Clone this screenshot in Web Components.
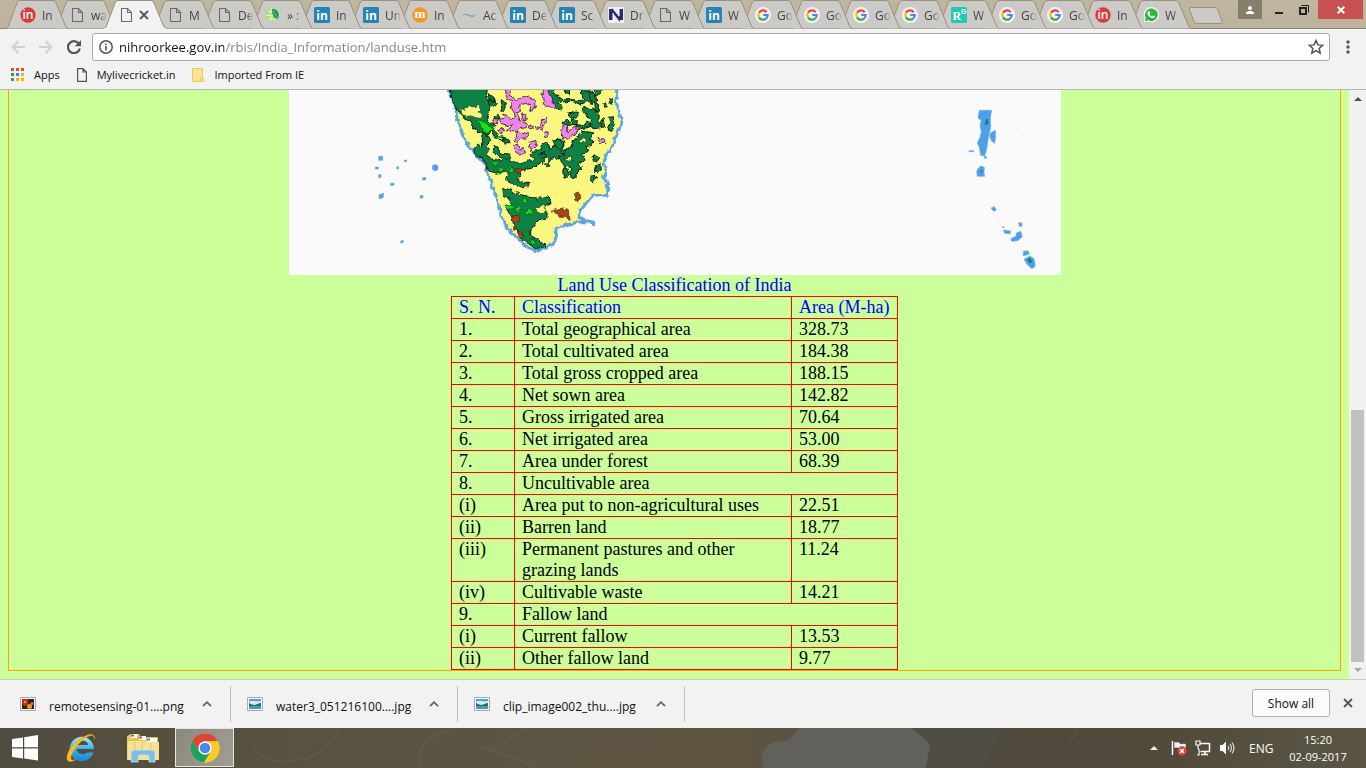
<!DOCTYPE html>
<html lang="en">
<head>
<meta charset="utf-8">
<title>Land Use Classification of India</title>
<style>
html, body { margin: 0; height: 100%; }
body { font-family: "Open Sans", "Noto Sans", sans-serif; font-size: 12px; color: #111; overflow: hidden; }
</style>
</head>
<body>
<desktop-screen>
  <tab-strip slot="top"></tab-strip>
  <nav-toolbar slot="top"></nav-toolbar>
  <bookmark-bar slot="top">
    <bookmark-item icon="apps">Apps</bookmark-item>
    <bookmark-item icon="page">Mylivecricket.in</bookmark-item>
    <bookmark-item icon="folder">Imported From IE</bookmark-item>
  </bookmark-bar>
  <page-view>
    <land-map></land-map>
    <landuse-table></landuse-table>
  </page-view>
  <download-shelf slot="bottom">
    <download-item icon="pngfile">remotesensing-01....png</download-item>
    <download-item icon="jpgfile">water3_051216100....jpg</download-item>
    <download-item icon="jpgfile">clip_image002_thu....jpg</download-item>
  </download-shelf>
  <task-bar slot="bottom"></task-bar>
</desktop-screen>

<script>
const gLogo = '<g fill="none" stroke-width="2.2"><path d="M11.7 5.2A4.7 4.7 0 0 0 4 5.6" stroke="#e8453c"/><path d="M4 5.6A4.7 4.7 0 0 0 4 10.4" stroke="#fbbc05"/><path d="M4 10.4A4.7 4.7 0 0 0 11.2 11.5" stroke="#34a853"/><path d="M11.2 11.5A4.7 4.7 0 0 0 12.7 8H8.2" stroke="#4285f4"/></g>';
const ICONS = {
  doc: [16, 16, '<path d="M3.5 1.5h6l4 4v9h-10zM9.500 1.500v4h4" fill="none" stroke="#6a6a6a" stroke-width="1.1"/>'],
  page: [10, 14, '<path d="M.6.600h5.400l3.400 3.400v9.400H.600zM6 .600v3.400h3.400" fill="none" stroke="#555" stroke-width="1.200"/>'],
  linkedin: [16, 16, '<rect width="16" height="16" rx="1.500" fill="#2683b4"/><text x="8" y="12.500" font-family="Open Sans" font-weight="700" font-size="12" text-anchor="middle" fill="#fff">in</text>'],
  redin: [16, 16, '<circle cx="8" cy="8" r="7.700" fill="#db3b38"/><text x="8" y="12" font-family="Open Sans" font-weight="600" font-size="12" text-anchor="middle" fill="#fff">in</text>'],
  mdot: [16, 16, '<circle cx="8" cy="8" r="7.700" fill="#ee9b26"/><text x="8" y="11" font-family="Liberation Serif" font-weight="700" font-size="13" text-anchor="middle" fill="#fff">m</text>'],
  globe: [16, 16, '<circle cx="7" cy="7.500" r="6.500" fill="#a8dd6c"/><path d="M1 8c4 1 8 1 12 0M3 4c3 1 5 1 8 0M7 1c-3 4-2 10 0 13M3 12h8" stroke="#e9f6d5" fill="none"/><path d="M7 2c6-1 8 5 6 10-4 0-6-4-6-10z" fill="#219650"/><path d="M8 3l5 9" stroke="#83d490" stroke-width=".7"/>'],
  wave: [16, 16, '<path d="M.5 9.500c2.500-4 5-3.500 7.500-2s5 1.500 7.500-1c-2 4.500-5 4-8 2.500s-5-1-7 .5z" fill="#73b3ae"/>'],
  navy: [16, 16, '<rect width="16" height="16" fill="#eee"/><path d="M1 2h4v11H1zM11 2h4v11h-4z" fill="#2b2a70"/><path d="M4 1l8 10v4L4 5z" fill="#2b2a70"/><path d="M5 6v9M11 1v8" stroke="#fff"/>'],
  google: [16, 16, '<circle cx="8" cy="8" r="8" fill="#f5f3f0"/>' + gLogo],
  rg: [16, 16, '<rect width="16" height="16" rx="1.500" fill="#26c6b4"/><text x="1.500" y="13" font-family="Liberation Serif" font-weight="700" font-size="12" fill="#fff">R</text><text x="10" y="7" font-family="Liberation Sans" font-weight="700" font-size="7" fill="#fff">G</text>'],
  whatsapp: [16, 16, '<path d="M.6 15.500l1.200-4A7.600 7.600 0 1 1 5 14.500z" fill="#fff"/><path d="M1.800 14.200l1-3.300A6.400 6.400 0 1 1 5.200 13.300z" fill="#2cb742"/><path d="M5.500 4.300l1.200.2.700 1.800-.8.900c.6 1.100 1.300 1.700 2.400 2.200l.9-1 1.900.9c0 1.300-1 1.900-2 1.900-2.900-.3-5.200-2.900-5.500-5 0-.9.500-1.600 1.200-1.900z" fill="#fff"/>'],
  close: [10, 10, '<path d="M1 1l8 8M9 1l-8 8" stroke="#555" stroke-width="1.800" fill="none"/>'],
  back: [14, 14, '<path d="M14 7H1.500M7.500 1L1.500 7l6 6" fill="none" stroke="#d0d0d0" stroke-width="2"/>'],
  fwd: [14, 14, '<path d="M0 7h12.500M6.500 1l6 6-6 6" fill="none" stroke="#d0d0d0" stroke-width="2"/>'],
  reload: [14, 14, '<path d="M11.600 3.400A6 6 0 1 0 12.800 8.500" fill="none" stroke="#555" stroke-width="2.200"/><path d="M14 0v6.300H7.700z" fill="#555"/>'],
  info: [14, 14, '<circle cx="7" cy="7" r="6.200" fill="none" stroke="#555" stroke-width="1.500"/><path d="M7 6v4.500M7 3.500v1.600" stroke="#555" stroke-width="1.600"/>'],
  star: [16, 16, '<path d="M8 1.500l1.900 4.400 4.800.4-3.600 3.200 1.100 4.700L8 11.700l-4.200 2.500 1.100-4.700L1.300 6.300l4.800-.4z" fill="none" stroke="#555" stroke-width="1.500"/>'],
  menu: [4, 14, '<circle cx="2" cy="2" r="1.700" fill="#555"/><circle cx="2" cy="7" r="1.700" fill="#555"/><circle cx="2" cy="12" r="1.700" fill="#555"/>'],
  apps: [13, 13, '<g fill="#e8453c"><path d="M0 0h3v3H0zM5 0h3v3H5zM10 0h3v3h-3z"/></g><path d="M0 5h3v3H0zM0 10h3v3H0z" fill="#2f9e52"/><path d="M5 5h3v3H5z" fill="#3b82f0"/><path d="M10 5h3v3h-3zM5 10h3v3H5zM10 10h3v3h-3z" fill="#f5b400"/>'],
  folder: [12, 14, '<path d="M.5.500h10v10h1v3H.5z" fill="#ffe591" stroke="#e8c860"/><path d="M8.500 13v-3h2" fill="none" stroke="#e8c860"/>'],
  user: [8, 8, '<circle cx="4" cy="2" r="2" fill="#fff"/><path d="M0 8V6.500L2.500 5h3L8 6.500V8z" fill="#fff"/>'],
  min: [8, 8, '<path d="M0 7h8" stroke="#222" stroke-width="2"/>'],
  restore: [10, 10, '<path d="M1 3h6v6H1z" fill="none" stroke="#222" stroke-width="2"/><path d="M2.500.500h7v7" fill="none" stroke="#222"/>'],
  winx: [8, 8, '<path d="M.7.700l6.600 6.600M7.300.700L.7 7.300" stroke="#fff" stroke-width="2"/>'],
  caret: [10, 6, '<path d="M1 5.200l4-4 4 4" fill="none" stroke="#666" stroke-width="1.800"/>'],
  pngfile: [16, 14, '<path d="M.5.500h15v13H.5z" fill="#fff" stroke="#aaa"/><path d="M2 2h12v10H2z" fill="#3a1c12"/><path d="M2 2h6v6l-4 1-2-2z" fill="#c62718"/><circle cx="5" cy="5" r="1.200" fill="#e8a52a"/><circle cx="9.500" cy="9.500" r="2.500" fill="#e99a1c"/><circle cx="12" cy="6.500" r="1.500" fill="#d77b1b"/>'],
  jpgfile: [16, 14, '<path d="M.5.500h15v13H.5z" fill="#fff" stroke="#aaa"/><path d="M2 2h12v10H2z" fill="#4aa3dc"/><path d="M2 5c3-2 6 0 12-1v5H2z" fill="#d5ecf8"/><path d="M2 6c2 1 4 2 6 2 2-1 4-2 6-2v3H2z" fill="#2e6b5e"/><path d="M2 9h12v3H2z" fill="#3f9fc2"/>'],
  windows: [26, 26, '<path d="M0 4l11-1.600V12.300H0zM12.200 2.200L26 0v12.300H12.200zM0 13.500h11v9.900L0 21.900zM12.200 13.500H26V25.500l-13.800-1.900z" fill="#fff"/>'],
  ie: [32, 32, '<defs><linearGradient id="b" x2="0" y2="1"><stop offset="0" stop-color="#a2e6ff"/><stop offset=".5" stop-color="#35b3ee"/><stop offset="1" stop-color="#1b83d6"/></linearGradient></defs><path d="M22.500 20.500h6A12.200 12.200 0 1 1 29 17H11.500c.4 3.300 2.600 5 5.700 5 2.400 0 4-.5 5.300-1.500zM11.800 13h11.400c-.5-2.800-2.700-4.200-5.600-4.200s-5.200 1.600-5.800 4.200z" fill="url(#b)"/><path d="M29.500 7c1-4-3-6-9-3C12 7 2 18 2 26c0 5 5 4 9 1.500-5 2-6-.5-4.500-4.500C9 16 17 7.500 23 4.500c4-2 6.500-1 6.500 2.500z" fill="#fbbf1d" stroke="#e29a12" stroke-width=".5"/>'],
  explorer: [32, 30, '<path d="M0 3l4-2h8l2 3h17v22H0z" fill="#e7c35e"/><path d="M4 1h6v4H4z" fill="#fff"/><path d="M4 1.500h3v2H4z" fill="#19a84a"/><path d="M12 3h7v4h-7z" fill="#fff"/><path d="M12 3.500h3v2h-3z" fill="#e24a2c"/><path d="M20 5h10v4H20z" fill="#fff"/><path d="M20 5.500h3v2h-3z" fill="#2c8ee0"/><path d="M0 8h20l2 1h10v18H0z" fill="#f5e093"/><path d="M0 8v19M8 9v16M15 9v12M24 10v9" stroke="#e0c060" stroke-width=".8"/><path d="M4 29V20q0-3 4-3h16q4 0 4 3v9h-6v-5q0-2-3-2h-5q-3 0-3 2v5z" fill="#7dbde0" stroke="#c3e8f8" stroke-width=".8"/>'],
  chrome: [30, 30, '<circle cx="15" cy="15" r="14.500" fill="#fbc116"/><path d="M2.400 7.800A14.500 14.500 0 0 1 27.800 8.200L15 8.300 9 18.500z" fill="#dc4437"/><path d="M2.400 7.800A14.500 14.500 0 0 0 14 29.500L21 18.400 9.200 18.400z" fill="#1da05f"/><path d="M27.800 8.200A14.500 14.500 0 0 1 14 29.500l7-11.500-1.500-9.800z" fill="#fccb28"/><circle cx="15" cy="15" r="6.700" fill="#fff"/><circle cx="15" cy="15" r="5.300" fill="#4a88ef"/>'],
  up: [8, 4, '<path d="M0 4l4-4 4 4z" fill="#eee"/>'],
  flag: [16, 16, '<path d="M1.500 1v14" stroke="#fff" stroke-width="1.500"/><path d="M3 2h5l1 1.500h6V9H8L7 8H3z" fill="#eee" stroke="#333" stroke-width=".5"/><circle cx="11" cy="11" r="4.700" fill="#e03a2f"/><path d="M9 9l4 4M13 9l-4 4" stroke="#fff" stroke-width="1.600"/>'],
  network: [16, 16, '<path d="M5 3.500h9.500v8H5.500M10 12v2M6 14.500h7" fill="none" stroke="#fff" stroke-width="1.500"/><path d="M1 1h4v4H1zM3 5v3l1 2v5H2" fill="#444" stroke="#fff" stroke-width="1.200"/>'],
  sound: [16, 16, '<path d="M1 5h2.500L7 1.500v13L3.500 11H1z" fill="#fff"/><path d="M9 6q1.500 2 0 4M11 4q3 4 0 8M13 2.500q4 5.500 0 11" fill="none" stroke="#ddd" stroke-width="1.200"/>'],
  scrollup: [8, 4, '<path d="M0 4l4-4 4 4z" fill="#505050"/>'],
  scrolldown: [8, 4, '<path d="M0 0l4 4 4-4z" fill="#a3a3a3"/>']
};

function define(name, html, setup) {
  const tpl = document.createElement('template');
  tpl.innerHTML = html;
  customElements.define(name, class extends HTMLElement {
    constructor() {
      super();
      this.attachShadow({ mode: 'open' }).appendChild(tpl.content.cloneNode(true));
    }
    connectedCallback() { if (setup) setup(this, this.shadowRoot); }
  });
}

define('ui-icon', '<style>:host{display:block;flex:none;line-height:0}svg{display:block}</style><span></span>', (el, root) => {
  const [w, h, art] = ICONS[el.getAttribute('name')];
  root.querySelector('span').innerHTML = `<svg width="${w}" height="${h}" viewBox="0 0 ${w} ${h}" aria-hidden="true">${art}</svg>`;
});

define('desktop-screen', `<style>
:host{display:flex;flex-direction:column;height:100vh;background:#f2f2f2}
main{flex:1;min-height:0;display:flex}
</style><slot name="top"></slot><main><slot></slot></main><slot name="bottom"></slot>`);

define('browser-tab', `<style>
:host{display:block;flex:none;width:62px;margin-right:-13px;height:28px;position:relative}
:host([narrow]){margin-right:-14px}
.shape{position:absolute;inset:0;z-index:-1;display:block}
.shape path{fill:#cccac7;stroke:#99917e}
:host([active]) .shape path{fill:#f2f2f2}
:host([active]) .shape line{stroke:#f2f2f2}
.shape line{stroke:none}
button{all:unset;box-sizing:border-box;display:flex;align-items:center;gap:6px;width:53px;height:28px;padding:2px 0 0 14px;overflow:hidden}
span{overflow:hidden;white-space:nowrap;flex:1;color:#444;-webkit-mask-image:linear-gradient(90deg,#000 50%,transparent 95%)}
:host([active]) button{gap:5px}
</style><svg class="shape" width="62" height="29"><path d="M0 28.500L2 27 11 3Q12 .5 14 .5H47Q49 .5 50 3L60 27 62 28.500"/><line x1="0" y1="28.500" x2="62" y2="28.500"/></svg><button type="button"></button>`,
(el, root) => {
  el.style.isolation = 'isolate';
  const b = root.querySelector('button');
  b.innerHTML = `<ui-icon name="${el.getAttribute('icon')}"></ui-icon>` + (el.hasAttribute('active') ? '<ui-icon name="close"></ui-icon>' : '<span></span>');
  const s = b.querySelector('span');
  if (s) s.textContent = el.getAttribute('label');
  else b.setAttribute('aria-label', 'Current page');
});

define('tab-strip', `<style>
:host{display:flex;height:29px;background:linear-gradient(#c0b69f,#bdb39c);box-sizing:border-box;justify-content:space-between;box-shadow:inset 0 -1px #8c8475}
.tabs{display:flex;padding-left:6px}
.new{all:unset;margin:6px 0 0 11px;height:18px}
svg{display:block}
.win{display:flex;flex:none;align-items:flex-start;padding-right:3px}
.win button{all:unset;box-sizing:border-box;height:19px;display:flex;align-items:center;justify-content:center}
.win .user{background:#857e6d;width:24px;margin-right:4px}
.win .min{width:25px}
.win .max{width:26px}
.win .red{background:#c75050;width:45px;margin-left:1px}
</style><div class="tabs"></div><div class="win">
<button class="user" aria-label="Profile"><ui-icon name="user"></ui-icon></button>
<button class="min" aria-label="Minimize"><ui-icon name="min"></ui-icon></button>
<button class="max" aria-label="Restore"><ui-icon name="restore"></ui-icon></button>
<button class="red" aria-label="Close"><ui-icon name="winx"></ui-icon></button></div>`, (el, root) => {
  const list = [['redin','In'],['doc','wa'],['doc',''],['doc','M'],['doc','De'],['globe','» :'],['linkedin','In'],['linkedin','Un'],['mdot','In'],['wave','Ac'],['linkedin','De'],['linkedin','Sc'],['navy','Dr'],['doc','W'],['linkedin','W'],['google','Go'],['google','Go'],['google','Go'],['google','Go'],['rg','W'],['google','Go'],['google','Go'],['redin','In'],['whatsapp','W']];
  const box = root.querySelector('.tabs');
  list.forEach(([icon, label], i) => {
    const t = document.createElement('browser-tab');
    t.setAttribute('icon', icon);
    t.setAttribute('label', label);
    if (i === 2) t.setAttribute('active', '');
    if (i > 18) t.setAttribute('narrow', '');
    t.style.zIndex = i === 2 ? 50 : 40 - i;
    box.appendChild(t);
  });
  const n = document.createElement('button');
  n.className = 'new';
  n.setAttribute('aria-label', 'New tab');
  n.innerHTML = '<svg width="36" height="18"><path d="M3 1.500h24q2 0 3 2l4 12q0 2-2 2H9q-2 0-3-2L1.500 3.500q0-2 1.500-2z" fill="#cccac7" stroke="#99917e"/></svg>';
  box.appendChild(n);
});

define('nav-toolbar', `<style>
:host{display:flex;align-items:center;height:33px;padding:3px 16px 0 11px;box-sizing:border-box}
button{all:unset;display:block;margin-right:14px}
.box{flex:1;display:flex;align-items:center;gap:6px;height:28px;box-sizing:border-box;border:1px solid #a9a9a9;border-radius:3px;background:#fff;padding:0 5px 0 6px;margin-right:16px;margin-left:-3px}
.box button,.menu{margin:0}
input{all:unset;flex:1;min-width:0;font:13px/20px "Open Sans","Noto Sans",sans-serif;color:transparent;background:linear-gradient(90deg,#111 105px,#808080 105px);-webkit-background-clip:text;background-clip:text}
</style>
<button aria-label="Back"><ui-icon name="back"></ui-icon></button>
<button aria-label="Forward"><ui-icon name="fwd"></ui-icon></button>
<button aria-label="Reload"><ui-icon name="reload"></ui-icon></button>
<div class="box"><ui-icon name="info"></ui-icon><input type="text" aria-label="Address" value="nihroorkee.gov.in/rbis/India_Information/landuse.htm"><button aria-label="Bookmark this page"><ui-icon name="star"></ui-icon></button></div>
<button class="menu" aria-label="Menu"><ui-icon name="menu"></ui-icon></button>`);

define('bookmark-bar', `<style>
:host{display:flex;align-items:center;gap:17px;height:28px;box-sizing:border-box;padding:0 11px 2px;border-bottom:1px solid #b6b6b6}
</style><slot></slot>`);
define('bookmark-item', `<style>
:host{display:block}
a{display:flex;align-items:center;gap:10px;color:#111;text-decoration:none;font-size:11px;line-height:18px}
</style><a href="#"><i></i><slot></slot></a>`, (el, root) => {
  const ic = document.createElement('ui-icon');
  ic.setAttribute('name', el.getAttribute('icon'));
  root.querySelector('i').replaceWith(ic);
});

define('page-view', `<style>
:host{display:flex;flex:1;min-width:0;background:#ccff99}
.doc{flex:1;min-width:0;overflow:hidden;padding:0 8px 8px}
.frame{border:1px solid #ffa500;border-top:0;display:flex;flex-direction:column;align-items:center}
.rail{width:17px;box-sizing:border-box;background:#f1f1f1;display:flex;flex-direction:column;align-items:center;padding:7px 2px 7px}
.before{flex:308}.thumb{flex:251;align-self:stretch;background:#c1c1c1;margin-bottom:6px}
</style><div class="doc"><div class="frame"><slot></slot></div></div>
<div class="rail"><ui-icon name="scrollup"></ui-icon><div class="before"></div><div class="thumb"></div><ui-icon name="scrolldown"></ui-icon></div>`);

define('land-map', `<style>
:host{display:block;background:#fafafa;width:772px;max-width:100%}
svg{display:block}
.g{fill:#0e8145;stroke:#0a2412;stroke-width:3}
.p{fill:#ee82ee;stroke:#301830;stroke-width:2.500}
.l{fill:#17e017;stroke:#0c4a14;stroke-width:2}
.r{fill:#a8441c;stroke:#4a1c0c;stroke-width:2}
.b{fill:#4c9fe8;stroke:#69b0ec;stroke-width:2}
</style><svg width="772" height="185" role="img" aria-label="Land use map of India">
<defs><filter id="coast" x="-5%" y="-5%" width="110%" height="110%" color-interpolation-filters="sRGB"><feTurbulence type="turbulence" baseFrequency=".05" numOctaves="2" seed="4" result="n"/><feTurbulence type="fractalNoise" baseFrequency=".06" numOctaves="2" seed="7" result="m"/><feDisplacementMap in="SourceGraphic" in2="m" scale="16" xChannelSelector="R" yChannelSelector="G"/></filter></defs>
<g transform="translate(141,0) scale(.33333)" stroke-linejoin="round">
<g filter="url(#coast)">
<path d="M55-25V-5L68 30 78 55 80 80 87 100 98 130 114 165 135 190 158 215 172 242 185 285 198 320 208 345 213 380 232 415 262 445 288 470 318 482 345 475 370 462 380 440 378 415 392 408 430 400 455 395 490 398 492 404 488 396 460 390 444 380 455 358 480 325 495 315 533 316 533 280 520 264 527 240 522 215 530 192 548 168 552 150 568 120 574 90 566 60 557 35 562 0V-25z" fill="#f9f77f" stroke="#5aa5e2" stroke-width="8"/>
<path class="g" d="M58-20H172V-3L170 18 180 40 178 66 170 85 182 98 195 105 188 120 170 132 158 126 142 128 130 110 118 92 104 88 90 70 78 54 66 25z"/>
<path d="M92 62L110 55 118 44 134 54 140 42 150 50 148 66 158 76 150 88 136 86 130 76 118 82 104 78z" fill="#f9f77f" stroke="#0c3318" stroke-width="2"/>
<path class="g" d="M160 130L176 136 182 152 170 168 178 178 168 194 182 204 200 205 214 214 224 206 250 212 270 222 294 214 312 206 300 194 308 182 328 184 334 166 348 156 360 176 378 160 370 152 380 146 398 150 402 166 392 178 408 184 404 194 390 190 382 208 370 200 356 218 362 228 350 230 336 214 328 222 300 236 270 242 276 256 262 266 280 280 296 276 298 290 276 294 258 284 240 282 228 262 238 250 220 246 196 250 178 242 164 220 156 206 134 188 130 178 142 164 154 170z"/>
<path class="g" d="M192 166L206 176 214 190 236 192 244 206 232 210 214 206 202 196 190 184zM184 120L200 128 206 144 196 140zM212 138L232 146 242 152 236 158 220 154zM178 30L192 26 200 44 190 52 182 46zM212 28L224 36 226 58 212 66 216 46zM192 78L206 74 210 84 196 88z"/>
<path class="g" d="M218 292L236 298 262 312 290 318 320 328 340 320 358 322 360 338 346 346 336 360 352 366 350 388 330 390 318 402 304 420 300 436 316 444 330 458 346 462 342 472 316 476 296 462 270 444 262 420 250 400 244 382 232 360 248 344 234 324 220 314z"/>
<path d="M318 352L340 346 346 360 334 374 320 368z" fill="#f9f77f" stroke="#0c3318" stroke-width="2"/>
<path class="g" d="M350-12H370V0L386 20 400 30 386 42 398 56 388 62 370 48 362 24 352 14zM400 36L420 34 452 42 470 34 488 44 484 22 498 20 512 6 520-12H490L500 14 482 8 474-12H452L456 18 466 28 450 32 424 28 404 30zM456 54L472 50 494 60 508 74 506 92 518 112 494 116 478 108 482 90 468 74zM494 36L506 44 504 68 496 62zM416 68L442 66 440 80 426 86 416 78zM396 98L414 90 420 104 400 110zM440 104L462 106 470 96 484 104 474 112 442 120zM514 92L520 84 524 112 514 106zM536 82L550 80 554 104 546 124 534 120 540 102z"/>
<path class="g" d="M386 200L404 196 412 178 428 168 430 150 446 140 456 124 490 128 480 148 492 154 486 166 468 170 474 184 458 194 462 208 446 220 454 234 440 242 438 262 424 266 420 248 426 236 414 228 402 236 412 240 418 254 402 262 398 246 406 234 396 222z"/>
<path class="g" d="M486 200L498 194 506 208 502 216 490 212zM500 226L512 222 514 240 504 248 496 244zM484 258L496 252 500 262 490 276 480 270zM368 150L386 148 402 158 398 176 378 170zM210 152L236 146 242 156 228 160z"/>
<path d="M402 206L424 198 430 216 412 212zM448 150L470 146 466 156 450 160zM340 206L356 204 354 222 342 220z" fill="#f9f77f" stroke="#0c3318" stroke-width="2"/>
<path class="g" d="M402-12L420-8 418 12 404 8zM456-12L478-8 476 6 458 8zM478 8L496 14 500 34 480 32zM424 88L442 90 440 108 424 106zM326 194L344 184 350 200 334 206zM178 14L190 20 194 36 180 30zM522 40l8-4 2 14-8 2zM540 24l8 2-2 14-8-4z"/>
<path class="p" d="M222-14H240L242 20 258 28 282 24 292 18 308 28 316 32 318 46 308 66 300 64 304 46 292 40 276 42 266 46 272 60 262 72 270 88 280 96 288 100 284 114 268 116 262 126 244 122 230 126 236 114 248 106 228 106 212 100 208 88 226 84 218 70 232 72 240 88 256 84 252 68 244 50 248 34 232 28zM338-12H356L354 14 368 24 366 38 380 46 374 56 358 52 342 48 344 34 336 20zM196 84L206 92 202 102 190 98zM278 132L290 126 296 136 288 148 272 146 264 156 252 150 260 140 258 128 270 126zM316 110L332 112 334 94 350 80 348 100 340 106 336 120 320 118zM250 164L262 160 268 180 280 176 286 186 272 196 258 184zM300 154L320 154 322 166 308 172 302 182 298 168zM396 108L412 104 414 126 430 112 446 110 440 130 422 142 410 150 394 144zM504 146L524 148 524 160 510 160zM276 68L288 74 284 94 278 88zM206 120l12-6 6 8-12 6zM296 104l14 4-2 10-12-4z"/>
<circle class="p" cx="350" cy="133" r="8"/>
<path class="l" d="M144 90L156 88 164 98 178 104 194 118 178 124 164 128 154 112zM188 216L202 216 206 224 194 224zM204 234L218 236 222 248 208 248zM236 234L252 234 254 244 238 244zM278 328L290 322 294 338 280 342zM222 348L248 346 254 356 228 358zM258 352L272 354 268 370 260 366zM290 358L312 364 306 372 288 370zM304 446L314 446 314 464 306 462zM200 138L214 138 218 146 204 146z"/>
<path class="r" d="M160 216L172 216 170 224zM258 238L274 234 276 248 258 250zM258 302L266 304 262 310zM248 378L266 376 270 388 256 400 248 392zM262 424L276 428 282 440 268 444zM248 412L258 408 256 422zM368 362L398 354 414 358 418 376 420 390 404 382 388 382 382 370 370 370zM434 316L448 308 452 322 442 336 434 330z"/>
</g>
<path d="M16 223l8 5v10l-8 5-9-5v-11z" class="b"/></g>
<g transform="translate(71,50) scale(.33333)" class="b"><path d="M56 49h12v12H56zM46 81h9v6h-9zM56 104h7v9h-7zM110 80h6v7h-6zM133 60h7v5h-7zM91 130h11v6H91zM57 164l14-4v10l-8 6h-6zM187 114l11-2-1 8h-10zM180 167l9-1v8h-9zM122 303l9-2-3 8h-6z"/></g>
<g transform="translate(661,0) scale(.33333)" class="b"><path d="M88 61H125L121 82 122 112 118 130 114 150 110 178 104 198 92 196 88 172 82 158 90 142 94 126 90 104 94 92 84 84zM122 128L137 121 136 146 134 160 124 152 119 138zM57 182h14v3H57zM84 236L92 228 103 232 102 248 104 259H82L80 244zM103 199h6v6h-6zM123 354l10-4 6 10-8 4zM206 398l10 1v10h-8zM158 410h4v3h-4zM160 420l22 3-2 8-16-1zM198 430l14-6 5 16-14 12-18 2-2-8 16-8zM220 484l14-2 4 10-18 6zM222 508L240 498 252 506 256 528 246 536 232 524z"/><path d="M108 86l6 2 1 14-12 3 3-8zM232 508l8-4 8 12-10 4zM92 240h4v8h-4z" fill="#128070" stroke="none"/><path d="M199 116h5v2h-5zM141 384h3v3h-3z" fill="#ccc" stroke="none"/></g>
</svg>`);

define('landuse-table', `<style>
:host{display:block;width:447px;font:18px/21px "Liberation Serif","Times New Roman",serif;color:#000}
table{width:100%;border-spacing:0;table-layout:fixed}
caption{color:#00f}
th,td{box-sizing:border-box;font-weight:400;text-align:left;vertical-align:top;padding:0 0 0 7px;border:solid #f00;border-width:0 1px 1px 0}
tr>:first-child{border-left-width:1px}
thead th{border-top-width:1px;color:#00f}
.n{width:64px}.a{width:106px}
</style><table><caption>Land Use Classification of India</caption>
<colgroup><col class="n"><col><col class="a"></colgroup>
<thead><tr><th>S. N.</th><th>Classification</th><th>Area (M-ha)</th></tr></thead><tbody></tbody></table>`, (el, root) => {
  const rows = [['1.','Total geographical area','328.73'],['2.','Total cultivated area','184.38'],['3.','Total gross cropped area','188.15'],['4.','Net sown area','142.82'],['5.','Gross irrigated area','70.64'],['6.','Net irrigated area','53.00'],['7.','Area under forest','68.39'],['8.','Uncultivable area'],['(i)','Area put to non-agricultural uses','22.51'],['(ii)','Barren land','18.77'],['(iii)','Permanent pastures and other grazing lands','11.24'],['(iv)','Cultivable waste','14.21'],['9.','Fallow land'],['(i)','Current fallow','13.53'],['(ii)','Other fallow land','9.77']];
  root.querySelector('tbody').innerHTML = rows.map(r => '<tr>' + r.map((c, i) => `<td${r.length === 2 && i === 1 ? ' colspan="2"' : ''}>${c}</td>`).join('') + '</tr>').join('');
});

define('download-shelf', `<style>
:host{display:flex;align-items:center;height:49px;box-sizing:border-box;border-top:1px solid #ccc;background:#f2f2f2;padding:0 13px 0 4px}
.gap{flex:1}
button{all:unset;box-sizing:border-box;margin-bottom:2px}
.all{width:78px;height:28px;border:1px solid #b0b0b0;border-radius:3px;background:#fbfbfb;text-align:center;font-size:12px;color:#111;margin-right:13px}
</style><slot></slot><div class="gap"></div><button class="all">Show all</button><button aria-label="Close downloads"><ui-icon name="close"></ui-icon></button>`);
define('download-item', `<style>
:host{display:block;width:227px;box-sizing:border-box;border-right:1px solid #c0c0c0;height:36px}
button{all:unset;box-sizing:border-box;display:flex;align-items:center;width:100%;height:36px;padding:0 18px 0 16px;font-size:12px;color:#111}
.t{flex:1;margin-left:13px;padding-top:5px;line-height:18px;white-space:nowrap}
</style><button><i></i><span class="t"><slot></slot></span><ui-icon name="caret"></ui-icon></button>`, (el, root) => {
  const ic = document.createElement('ui-icon');
  ic.setAttribute('name', el.getAttribute('icon'));
  root.querySelector('i').replaceWith(ic);
});

define('task-bar', `<style>
:host{display:flex;align-items:center;height:40px;position:relative;isolation:isolate;background:#5a5445;color:#fff;padding:0 19px 0 12px;box-sizing:border-box;overflow:hidden}
.scene{position:absolute;inset:0;width:100%;height:100%;z-index:-1}
button{all:unset;box-sizing:border-box;display:flex;align-items:center;justify-content:center}
.start{width:26px}.ie{margin-left:27px;width:32px}.ex{margin-left:30px;width:32px}
.ch{margin-left:16px;width:59px;height:39px;background:linear-gradient(120deg,#8b887d,#a09d94);border:1px solid #e6e5e2;align-self:flex-start}
.gap{flex:1}
.tray{display:flex;align-items:center}
.tray ui-icon{margin-right:8px}
.tray ui-icon:first-child{margin-right:13px}
.lang{margin:0 16px 0 6px;width:24px;font-size:12px}
.clock{text-align:center;font-size:11px;line-height:17px;width:58px;white-space:nowrap}
</style><svg class="scene" viewBox="0 0 1366 40" preserveAspectRatio="none" aria-hidden="true">
<defs><linearGradient id="w"><stop offset="0" stop-color="#504c40"/><stop offset=".2" stop-color="#58513f"/><stop offset=".38" stop-color="#5c5543"/><stop offset=".53" stop-color="#5f5641"/><stop offset=".7" stop-color="#4f4a3e"/><stop offset=".85" stop-color="#514a3b"/><stop offset="1" stop-color="#5b5544"/></linearGradient></defs>
<path d="M0 0H1366V40H0z" fill="url(#w)"/>
<path d="M764 40C758 28 764 16 778 13 792 14 792 6 800 0H912C922 6 930 10 930 18L926 40z" fill="#61605a"/><path d="M912 0h90l-8 20-12 20h-56l4-24z" fill="#504d47"/>
<path d="M252 18q12 20 48 14 30-8 40-32M420 40q-6-30 30-38M480 18l60 22M490 24l36-24M1070 14l8-12" fill="none" stroke="#787260" opacity=".2" stroke-width="2"/>
</svg>
<button class="start" aria-label="Start"><ui-icon name="windows"></ui-icon></button>
<button class="ie" aria-label="Internet Explorer"><ui-icon name="ie"></ui-icon></button>
<button class="ex" aria-label="File Explorer"><ui-icon name="explorer"></ui-icon></button>
<button class="ch" aria-label="Chrome"><ui-icon name="chrome"></ui-icon></button>
<div class="gap"></div>
<div class="tray"><ui-icon name="up"></ui-icon><ui-icon name="flag"></ui-icon><ui-icon name="network"></ui-icon><ui-icon name="sound"></ui-icon></div>
<div class="lang">ENG</div><div class="clock">15:20<br>02-09-2017</div>`);
</script>
</body>
</html>
